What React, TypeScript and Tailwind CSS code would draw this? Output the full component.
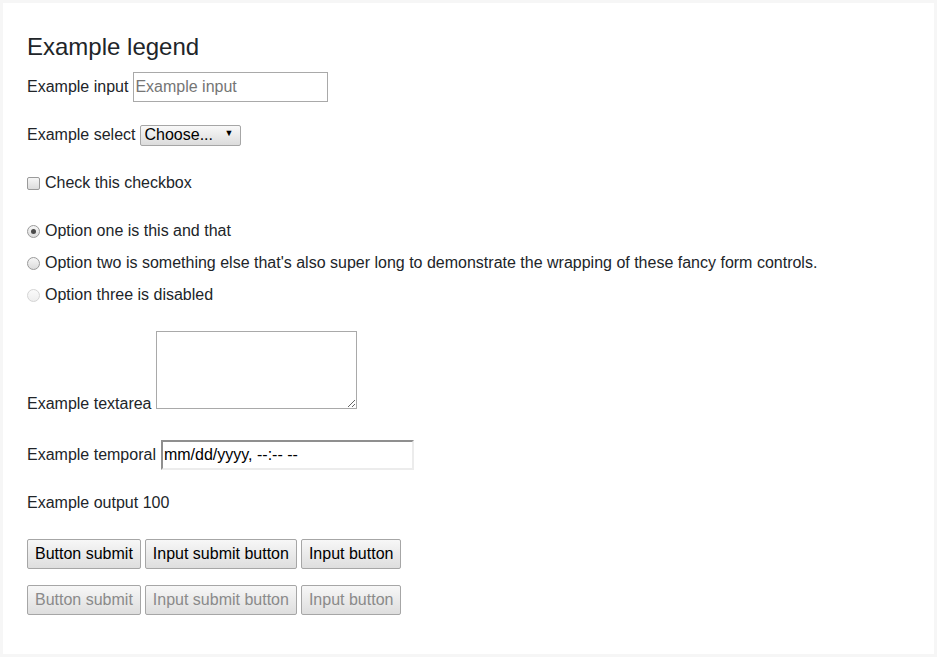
import React from "react";

const font = { fontFamily: '"Liberation Sans", Arial, sans-serif' };

function Radio({ checked, disabled }: { checked?: boolean; disabled?: boolean }) {
  return (
    <span
      className={`flex h-[13px] w-[13px] shrink-0 items-center justify-center rounded-full border ${
        disabled
          ? "border-[#d4d4d4] bg-gradient-to-b from-[#fafafa] to-[#eeeeee]"
          : "border-[#9a9a9a] bg-gradient-to-b from-[#f6f6f6] to-[#dcdcdc]"
      }`}
    >
      {checked && <span className="h-[5px] w-[5px] rounded-full bg-[#4a4a4a]" />}
    </span>
  );
}

function Btn({ label, disabled }: { label: string; disabled?: boolean }) {
  return (
    <button
      type="button"
      disabled={disabled}
      className={`h-[30px] rounded-[2px] border border-[#a6a6a6] bg-gradient-to-b from-[#f7f7f7] to-[#dedede] px-[7px] text-[16px] ${
        disabled ? "text-[#8a8a8a]" : "text-black"
      }`}
    >
      {label}
    </button>
  );
}

export default function App() {
  return (
    <div className="min-h-[657px] bg-[#f6f6f6] p-[3px]" style={font}>
      <div className="h-[651px] bg-white px-6 pt-[29px] text-[16px] text-[#212529]">
        <div className="text-[24px] leading-[30px]">Example legend</div>

        <div className="mt-[9px] flex h-[32px] items-center gap-[5px]">
          <span>Example input</span>
          <input
            placeholder="Example input"
            className="h-[30px] w-[195px] border border-[#a9a9a9] px-[1px] text-[16px] text-black placeholder:text-[#757575] outline-none"
          />
        </div>

        <div className="mt-[16px] flex h-[32px] items-center gap-[4px]">
          <span>Example select</span>
          <div className="relative flex h-[21px] w-[101px] items-center rounded-[2px] border border-[#a6a6a6] bg-gradient-to-b from-[#f8f8f8] to-[#dcdcdc] pl-[4px] text-black">
            <span className="leading-none">Choose...</span>
            <span className="absolute right-[6px] top-[3px] text-[9px] leading-none">▼</span>
          </div>
        </div>

        <div className="mt-[16px] flex h-[32px] items-center gap-[5px]">
          <span className="h-[13px] w-[13px] rounded-[2px] border border-[#9a9a9a] bg-gradient-to-b from-[#f6f6f6] to-[#dcdcdc]" />
          <span>Check this checkbox</span>
        </div>

        <div className="mt-[16px] flex h-[32px] items-center gap-[5px]">
          <Radio checked />
          <span>Option one is this and that</span>
        </div>
        <div className="flex h-[32px] items-center gap-[5px]">
          <Radio />
          <span>Option two is something else that's also super long to demonstrate the wrapping of these fancy form controls.</span>
        </div>
        <div className="flex h-[32px] items-center gap-[5px]">
          <Radio disabled />
          <span>Option three is disabled</span>
        </div>

        <div className="mt-[20px] flex items-end gap-[4px]">
          <span className="leading-[18px]">Example textarea</span>
          <textarea className="mb-[4px] h-[78px] w-[201px] border border-[#a9a9a9] outline-none" />
        </div>

        <div className="mt-[26px] flex h-[32px] items-center gap-[5px]">
          <span>Example temporal</span>
          <div className="flex h-[30px] w-[253px] items-center border-2 border-b-[#ececec] border-l-[#8f8f8f] border-r-[#ececec] border-t-[#8f8f8f] bg-white pl-[1px] text-black">
            mm/dd/yyyy, --:-- --
          </div>
        </div>

        <div className="mt-[16px] flex h-[32px] items-center">Example output 100</div>

        <div className="mt-[20px] flex gap-[4px]">
          <Btn label="Button submit" />
          <Btn label="Input submit button" />
          <Btn label="Input button" />
        </div>
        <div className="mt-[16px] flex gap-[4px]">
          <Btn label="Button submit" disabled />
          <Btn label="Input submit button" disabled />
          <Btn label="Input button" disabled />
        </div>
      </div>
    </div>
  );
}
